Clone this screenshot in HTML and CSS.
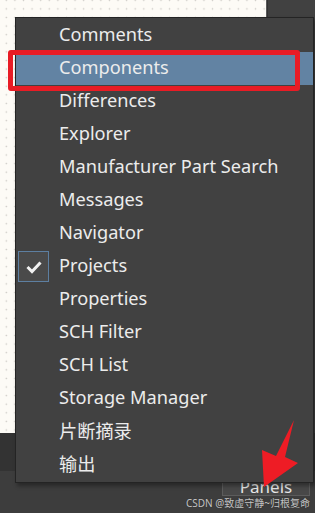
FILE: index.html
```html
<!DOCTYPE html>
<html lang="zh-CN">
<head>
    <meta charset="UTF-8">
    <meta name="viewport" content="width=device-width, initial-scale=1.0">
    <title>Panels</title>
    <link rel="stylesheet" href="styles.css">
</head>
<body>
    <div class="app">
        <div class="workspace">
            <div class="canvas"></div>
            <div class="side"></div>
        </div>
        <div class="band"></div>
        <div class="statusbar">
            <div class="panels-btn">Panels</div>
            <div class="watermark">CSDN @致虚守静~归根复命</div>
        </div>
    </div>

    <ul class="menu">
        <li class="item">Comments</li>
        <li class="item active">Components</li>
        <li class="item">Differences</li>
        <li class="item">Explorer</li>
        <li class="item">Manufacturer Part Search</li>
        <li class="item">Messages</li>
        <li class="item">Navigator</li>
        <li class="item checked"><span class="check">
            <svg width="18" height="14" viewBox="0 0 18 14"><path d="M2.5 7 L7 11.5 L15.5 2.5" fill="none" stroke="#f2f2f2" stroke-width="3"/></svg>
        </span>Projects</li>
        <li class="item">Properties</li>
        <li class="item">SCH Filter</li>
        <li class="item">SCH List</li>
        <li class="item">Storage Manager</li>
        <li class="item">片断摘录</li>
        <li class="item">输出</li>
    </ul>

    <div class="mark"></div>
    <svg class="arrow" width="40" height="70" viewBox="0 0 40 70">
        <polygon points="34,0 25,37 38,43 4,67 2,30 16,36" fill="#ee1c25"/>
    </svg>
</body>
</html>
```

FILE: styles.css
```css
* {
    box-sizing: border-box;
}
body {
    margin: 0;
    width: 315px;
    height: 513px;
    overflow: hidden;
    background: #3d3d3d;
    font-family: "Noto Sans", "Noto Sans CJK SC", sans-serif;
}
.app {
    display: flex;
    flex-direction: column;
    height: 513px;
}
.workspace {
    display: flex;
    height: 433px;
}
.canvas {
    flex: 1;
    background-color: #fdfbf6;
    background-image: radial-gradient(circle, #c9c7c2 0.8px, transparent 1px);
    background-size: 8.6px 8.6px;
    background-position: 2px -4px;
    border-right: 1px solid #5a5a5a;
}
.side {
    width: 48px;
    background: #414141;
    border-left: 1px solid #333;
}
.band {
    height: 38px;
    background: #333333;
}
.statusbar {
    flex: 1;
    display: flex;
    flex-direction: column;
    align-items: flex-end;
    padding: 0 5px 0 0;
    background: #3d3d3d;
}
.panels-btn {
    width: 88px;
    height: 25px;
    background: #484848;
    border: 1px solid #5c5c5c;
    color: #e6e6e6;
    font-size: 17px;
    line-height: 30px;
    text-align: center;
}
.watermark {
    margin-top: 1px;
    color: #c4c4c4;
    font-size: 10px;
    line-height: 12px;
    text-shadow: 0 0 1px #2a2a2a;
}
.menu {
    position: absolute;
    left: 15px;
    top: 17px;
    width: 299px;
    margin: 0;
    padding: 1px 0;
    list-style: none;
    background: #414141;
    border: 1px solid #242424;
    box-shadow: 2px 3px 4px rgba(0, 0, 0, 0.35);
}
.item {
    display: flex;
    align-items: center;
    height: 33px;
    padding-left: 43px;
    padding-bottom: 3px;
    color: #ececec;
    font-size: 18.2px;
    white-space: nowrap;
}
.item.active {
    background: #6283a3;
}
.check {
    display: flex;
    align-items: center;
    justify-content: center;
    width: 31px;
    height: 31px;
    margin-left: -41px;
    margin-right: 10px;
    margin-top: 3px;
    background: #4a4a4a;
    border: 1px solid #5d7fa1;
}
.mark {
    position: absolute;
    left: 8px;
    top: 50px;
    width: 292px;
    height: 41px;
    border: 5px solid #e81c25;
    border-radius: 3px;
}
.arrow {
    position: absolute;
    left: 260px;
    top: 420px;
}
```
